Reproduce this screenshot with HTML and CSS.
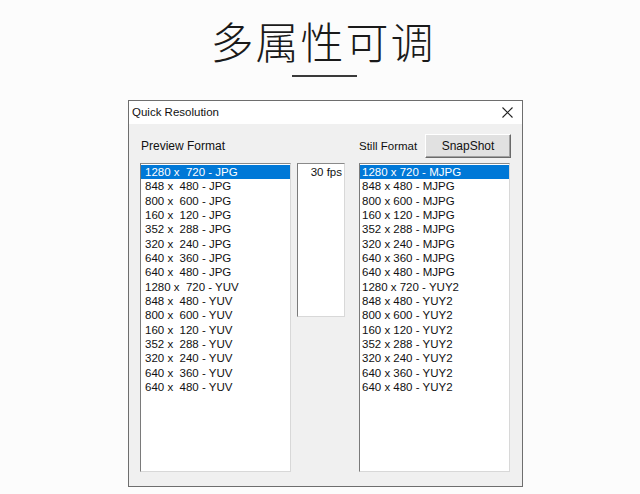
FILE: index.html
```html
<!DOCTYPE html>
<html>
<head>
<meta charset="utf-8">
<link rel="stylesheet" href="styles.css">
</head>
<body>
<div class="page">
  <h1 class="heading">多属性可调</h1>
  <div class="rule"></div>
  <div class="window">
    <div class="titlebar">
      <span class="title">Quick Resolution</span>
      <svg class="close" width="11" height="11" viewBox="0 0 11 11"><path d="M0.5 0.5 L10.5 10.5 M10.5 0.5 L0.5 10.5" stroke="#222" stroke-width="1.1" fill="none"/></svg>
    </div>
    <div class="body">
      <div class="label-left">Preview Format</div>
      <div class="right-head">
        <span class="label">Still Format</span>
        <button class="btn">SnapShot</button>
      </div>
      <div class="list list-left">
        <div class="item sel">1280 x  720 - JPG</div>
        <div class="item">848 x  480 - JPG</div>
        <div class="item">800 x  600 - JPG</div>
        <div class="item">160 x  120 - JPG</div>
        <div class="item">352 x  288 - JPG</div>
        <div class="item">320 x  240 - JPG</div>
        <div class="item">640 x  360 - JPG</div>
        <div class="item">640 x  480 - JPG</div>
        <div class="item">1280 x  720 - YUV</div>
        <div class="item">848 x  480 - YUV</div>
        <div class="item">800 x  600 - YUV</div>
        <div class="item">160 x  120 - YUV</div>
        <div class="item">352 x  288 - YUV</div>
        <div class="item">320 x  240 - YUV</div>
        <div class="item">640 x  360 - YUV</div>
        <div class="item">640 x  480 - YUV</div>
      </div>
      <div class="fps"><div class="fps-item">30 fps</div></div>
      <div class="list list-right">
        <div class="item sel">1280 x 720 - MJPG</div>
        <div class="item">848 x 480 - MJPG</div>
        <div class="item">800 x 600 - MJPG</div>
        <div class="item">160 x 120 - MJPG</div>
        <div class="item">352 x 288 - MJPG</div>
        <div class="item">320 x 240 - MJPG</div>
        <div class="item">640 x 360 - MJPG</div>
        <div class="item">640 x 480 - MJPG</div>
        <div class="item">1280 x 720 - YUY2</div>
        <div class="item">848 x 480 - YUY2</div>
        <div class="item">800 x 600 - YUY2</div>
        <div class="item">160 x 120 - YUY2</div>
        <div class="item">352 x 288 - YUY2</div>
        <div class="item">320 x 240 - YUY2</div>
        <div class="item">640 x 360 - YUY2</div>
        <div class="item">640 x 480 - YUY2</div>
      </div>
    </div>
  </div>
</div>
</body>
</html>
```
FILE: styles.css
```css
html, body {
  margin: 0;
  padding: 0;
  background: #fcfcfc;
}
.page {
  width: 640px;
  height: 494px;
  overflow: hidden;
  font-family: "Liberation Sans", Arial, sans-serif;
  color: #111;
}
.heading {
  margin: 18px 0 0 0;
  padding-left: 6px;
  text-align: center;
  font-family: "Noto Sans CJK SC", sans-serif;
  font-weight: 300;
  font-size: 43px;
  line-height: 45px;
  letter-spacing: 2px;
  color: #1a1a1a;
}
.rule {
  width: 65px;
  height: 2px;
  background: #3a3a3a;
  margin: 12px 0 0 292px;
}
.window {
  margin: 23px 0 0 128px;
  width: 393px;
  height: 385px;
  border: 1px solid #6e6e6e;
  display: flex;
  flex-direction: column;
  background: #f0f0f0;
}
.titlebar {
  height: 22px;
  background: #fff;
  display: flex;
  align-items: center;
  justify-content: space-between;
  padding: 0 9px 1px 3px;
}
.title {
  font-size: 11.5px;
  color: #111;
}
.close {
  display: block;
}
.body {
  flex: 1;
  display: grid;
  grid-template-columns: 151px 6px 48px 14px 151px;
  grid-template-rows: 23px 309px;
  row-gap: 6px;
  padding: 10px 0 0 11px;
}
.label-left {
  grid-column: 1 / 4;
  grid-row: 1;
  font-size: 12px;
  padding-left: 1px;
  align-self: center;
  padding-top: 1px;
}
.right-head {
  grid-column: 5;
  grid-row: 1;
  display: flex;
  align-items: center;
  justify-content: space-between;
}
.list-left {
  grid-column: 1;
  grid-row: 2;
}
.fps {
  grid-column: 3;
  grid-row: 2;
  align-self: start;
}
.list-right {
  grid-column: 5;
  grid-row: 2;
}
.label {
  font-size: 11.5px;
  padding-top: 1px;
}
.btn {
  width: 86px;
  height: 24px;
  margin: 0 -1px 0 0;
  padding: 0;
  font-family: "Liberation Sans", Arial, sans-serif;
  font-size: 12px;
  color: #111;
  background: #e1e1e1;
  border: 1px solid;
  border-color: #fff #6a6a6a #6a6a6a #fff;
  box-shadow: inset -1px -1px 0 #a0a0a0;
}
.list, .fps {
  background: #fff;
  border: 1px solid;
  border-color: #8a8a8a #d8d8d8 #d8d8d8 #7a7a7a;
  box-sizing: border-box;
  padding-top: 1px;
}
.list {
  height: 309px;
}
.fps {
  height: 154px;
}
.item {
  height: 14.33px;
  line-height: 14.33px;
  font-size: 11.5px;
  white-space: pre;
  color: #111;
}
.list-left .item {
  padding-left: 4px;
}
.list-right .item {
  padding-left: 2px;
}
.item.sel {
  background: #0078d7;
  color: #fff;
}
.fps-item {
  height: 14.33px;
  line-height: 14.33px;
  font-size: 11.5px;
  text-align: right;
  padding-right: 2px;
}
```
